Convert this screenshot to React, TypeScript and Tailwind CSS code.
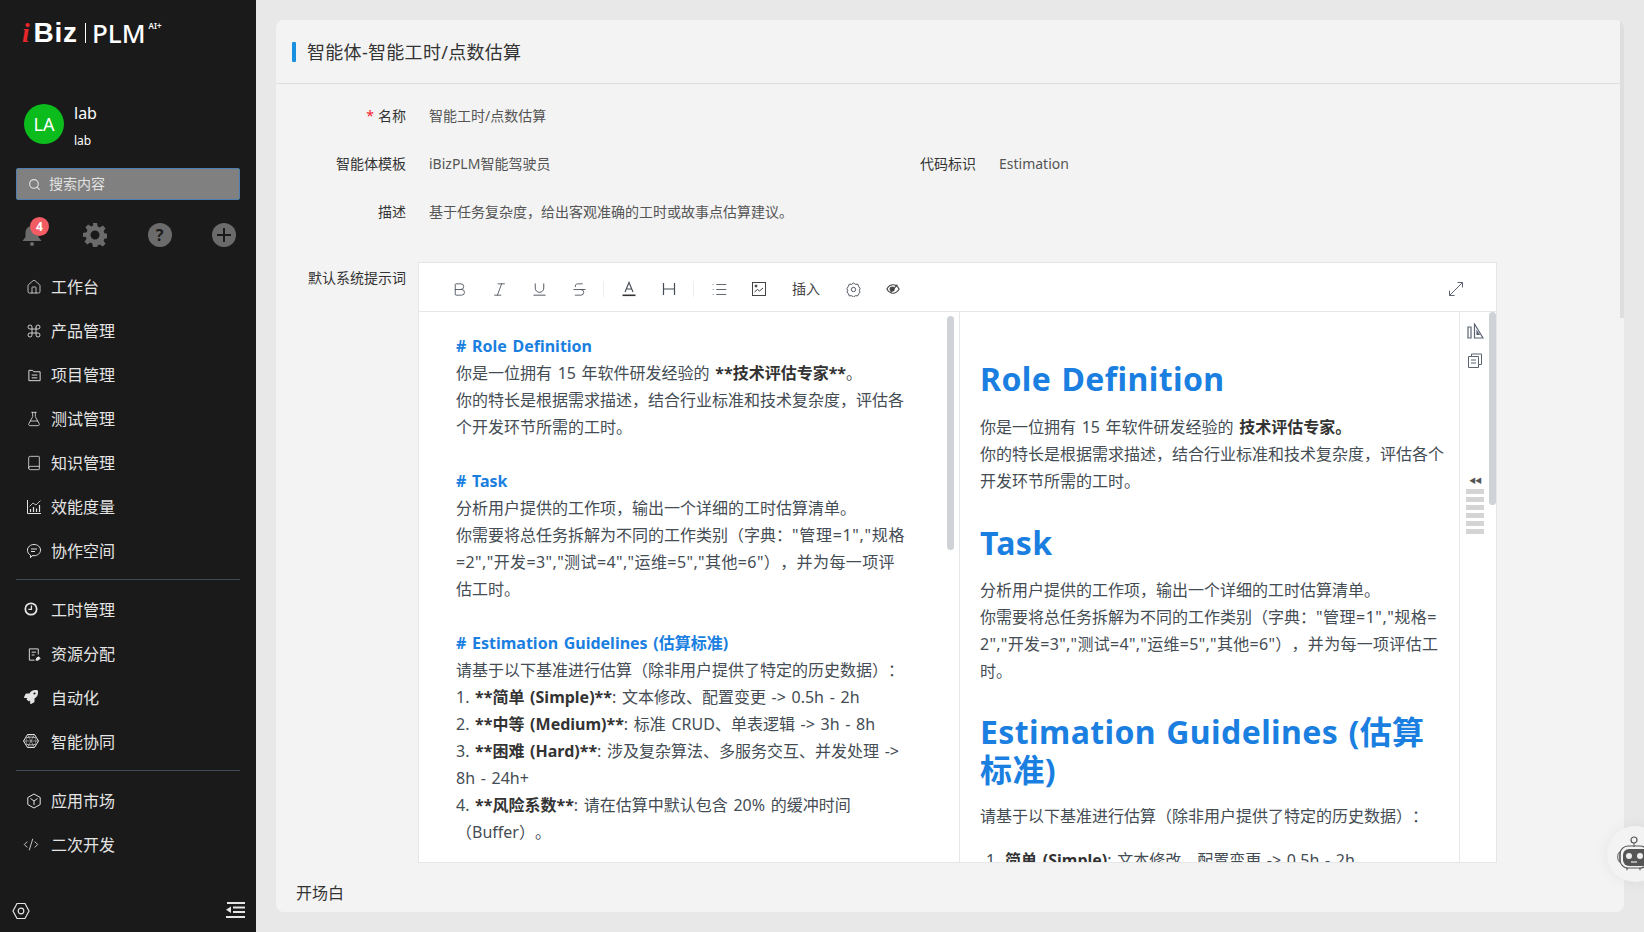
import React from "react";
import {
  Bold,
  Book,
  CodeXml,
  Command,
  FlaskConical,
  House,
  Italic,
  List,
  Search,
  Strikethrough,
  Underline,
} from "lucide-react";
import { FaRocket } from "react-icons/fa";

const Svg = ({ children, size = 16, className = "" }: { children: React.ReactNode; size?: number; className?: string }) => (
  <svg width={size} height={size} viewBox="0 0 16 16" fill="none" stroke="currentColor" strokeWidth="1" className={className}>
    {children}
  </svg>
);

const FolderIcon = () => (
  <Svg size={15}>
    <path d="M2 2.500h4l1 1.500h7v9.500H2z" />
    <path d="M5 7.500h6M5 10.500h6" />
  </Svg>
);
const ChartIcon = () => (
  <Svg>
    <path d="M1.500 1v13.500H15" />
    <path d="M4.500 13v-3M7.500 13V8M10.500 13V9.500M13.500 13V6" strokeWidth="1.200" />
    <path d="M3.500 7.500L7 4l3 2L14.500 1.500" strokeWidth="0.800" />
  </Svg>
);
const ChatIcon = () => (
  <Svg>
    <path d="M8 1.500c3.600 0 6.500 2.400 6.500 5.600S11.600 12.700 8 12.700H6l-1.500 2v-2.500C2.700 11.300 1.500 9.400 1.500 7.100 1.500 3.900 4.400 1.500 8 1.500z" />
    <path d="M5 6h6M5 8.500h4" />
  </Svg>
);
const ClockIcon = () => (
  <Svg size={14}>
    <circle cx="8" cy="8" r="6.500" strokeWidth="2" />
    <path d="M8.500 4v4.500H5" strokeWidth="1.500" />
  </Svg>
);
const ResourceIcon = () => (
  <Svg size={15}>
    <path d="M12 8V2H2.500v12H8" />
    <path d="M5 5.500h4.500M5 8.500h3" />
    <path d="M9.500 14l1-2.500 2-1 1.500 1.500-2 2z" fill="currentColor" />
  </Svg>
);
const AgentIcon = () => (
  <Svg size={18}>
    <path d="M4.500 1.500h7L15.500 8l-4 6.500h-7L.5 8z" />
    <path d="M4.500 1.500L11.500 14.500M11.500 1.500L4.500 14.500M.5 8h15M3 4.500h10M3 11.500h10" strokeWidth="0.500" />
    <circle cx="8" cy="8" r="5" strokeWidth="0.500" />
  </Svg>
);
const MarketIcon = () => (
  <Svg>
    <path d="M8 1l6.200 3.500v7L8 15l-6.200-3.500v-7z" />
    <path d="M4.500 5.500L8 8l3.500-2.500M8 8v4" />
  </Svg>
);

const topItems = [
  { label: "工作台", icon: <House size={16} strokeWidth={1.2} /> },
  { label: "产品管理", icon: <Command size={16} strokeWidth={1.3} /> },
  { label: "项目管理", icon: <FolderIcon /> },
  { label: "测试管理", icon: <FlaskConical size={16} strokeWidth={1.2} /> },
  { label: "知识管理", icon: <Book size={16} strokeWidth={1.2} /> },
  { label: "效能度量", icon: <ChartIcon /> },
  { label: "协作空间", icon: <ChatIcon /> },
];
const midItems = [
  { label: "工时管理", icon: <ClockIcon />, shift: true },
  { label: "资源分配", icon: <ResourceIcon /> },
  { label: "自动化", icon: <FaRocket size={14} />, shift: true },
  { label: "智能协同", icon: <AgentIcon />, shift: true },
];
const lowItems = [
  { label: "应用市场", icon: <MarketIcon /> },
  { label: "二次开发", icon: <CodeXml size={17} strokeWidth={1.3} />, shift: true },
];

type Item = { label: string; icon: React.ReactNode; shift?: boolean };

const NavList = ({ items }: { items: Item[] }) => (
  <ul>
    {items.map((item) => (
      <li key={item.label} className="flex h-11 items-center text-base text-[#e4e4e4]">
        <span className={`flex w-4 items-center justify-center ${item.shift ? "ml-[23px] mr-[12px] -translate-y-[1px]" : "ml-[26px] mr-[9px]"}`}>{item.icon}</span>
        {item.label}
      </li>
    ))}
  </ul>
);

const Sidebar = () => (
  <aside className="flex h-full w-64 shrink-0 flex-col bg-[#1a1a1a] text-white">
    <div className="flex h-[62px] items-start pl-[22px] pt-[18px] leading-none">
      <span className="mr-[4px] font-['Liberation_Serif'] text-[27px] italic font-bold leading-[30px] text-[#e8262a]">i</span>
      <span className="font-['Liberation_Sans'] text-[28px] font-bold leading-[30px] tracking-[0.8px]">Biz</span>
      <span className="ml-[7px] mr-[6px] mt-[5px] h-[20px] w-px bg-white" />
      <span className="text-[26px] font-medium leading-[30px]">PLM</span>
      <span className="ml-[3px] mt-[4px] text-[8px] font-semibold leading-none">AI+</span>
    </div>
    <div className="mt-[42px] flex h-[48px] pl-6">
      <div className="flex size-10 items-center justify-center rounded-full bg-[#0cbb1c] text-lg">LA</div>
      <div className="ml-[10px] -mt-[3px]">
        <div className="text-base leading-[24px]">lab</div>
        <div className="mt-[6px] text-xs leading-[20px]">lab</div>
      </div>
    </div>
    <div className="mx-4 mt-4 flex h-8 items-center rounded-[2px] border border-[#4f7fb0] bg-[#808080] pl-[11px] text-sm text-[#e2e2e2]">
      <Search size={13} strokeWidth={2} className="mr-2" />
      搜索内容
    </div>
    <div className="mt-[23px] flex h-6 items-center justify-between pl-[21px] pr-[20px] text-[#6b6b6b]">
      <div className="relative">
        <svg width="22" height="24" viewBox="0 0 22 24" fill="currentColor">
          <path d="M11 3c4 0 6.500 3 6.500 7v4l3 4H1.500l3-4v-4C4.500 6 7 3 11 3z" />
          <circle cx="11" cy="21" r="2" />
        </svg>
        <span className="absolute -top-[6px] left-[9px] flex size-[19px] items-center justify-center rounded-full bg-[#f25c62] text-xs font-bold text-white">4</span>
      </div>
      <svg width="24" height="24" viewBox="0 0 24 24" fill="currentColor">
        <path fillRule="evenodd" d="M10 0h4l.7 3.600 2 .8L19.800 2.400l2.800 2.800-2 3 .8 2 3.600.8v4l-3.600.7-.8 2 2 3-2.800 2.800-3-2-2 .8L14 24h-4l-.7-3.600-2-.8-3 2-2.800-2.800 2-3-.8-2L0 14v-4l3.600-.8.800-2-2-3L5.200 1.400l3 2 2-.8zM12 7.500a4.500 4.500 0 100 9 4.500 4.500 0 000-9z" />
      </svg>
      <span className="flex size-6 items-center justify-center rounded-full bg-[#6b6b6b] text-base font-bold text-[#1a1a1a]">?</span>
      <span className="flex size-6 items-center justify-center rounded-full bg-[#6b6b6b]">
        <svg width="14" height="14" viewBox="0 0 14 14" stroke="#1a1a1a" strokeWidth="2">
          <path d="M7 0v14M0 7h14" />
        </svg>
      </span>
    </div>
    <div className="mt-[18px]">
      <NavList items={topItems} />
    </div>
    <div className="mx-4 mt-[6px] mb-[8px] h-px bg-[#3f4a59]" />
    <NavList items={midItems} />
    <div className="mx-4 mt-[6px] mb-[8px] h-px bg-[#3f4a59]" />
    <NavList items={lowItems} />
    <div className="mt-auto flex h-[32px] items-start justify-between pl-3 pr-[11px] pt-[2px]">
      <svg width="18" height="18" viewBox="0 0 18 18" fill="none" stroke="#e4e4e4" strokeWidth="1.200">
        <path d="M5 1.500h8L17 9l-4 7.500H5L1 9z" />
        <circle cx="9" cy="9" r="2.800" />
      </svg>
      <svg width="19" height="16" viewBox="0 0 19 16" fill="#e4e4e4">
        <path d="M1 0h18v2H1zM7 4.500h12v2H7zM7 9h12v2H7zM0 14h19v2H0zM5 4.500v6.500L0 7.800z" />
      </svg>
    </div>
  </aside>
);

const FormRow = ({ label, required, children }: { label: string; required?: boolean; children: React.ReactNode }) => (
  <div className="flex h-12 items-center text-sm">
    <label className="w-[130px] shrink-0 text-right text-[#333]">
      {required && <span className="mr-1 text-[#f5222d]">*</span>}
      {label}
    </label>
    <div className="ml-[23px] text-[#555]">{children}</div>
  </div>
);

const ToolIcon = ({ children, className = "" }: { children: React.ReactNode; className?: string }) => (
  <span className={`flex h-6 w-6 items-center justify-center text-[#444b55] ${className}`}>{children}</span>
);

const Toolbar = () => (
  <div className="flex h-[49px] items-center border-b border-[#e5e6e8] pl-[28px] pr-[32px] pt-[4px]">
    <ToolIcon><Bold size={17} strokeWidth={1.2} /></ToolIcon>
    <ToolIcon className="ml-[16px]"><Italic size={17} strokeWidth={1.2} /></ToolIcon>
    <ToolIcon className="ml-[16px]"><Underline size={17} strokeWidth={1.3} /></ToolIcon>
    <ToolIcon className="ml-[16px]"><Strikethrough size={17} strokeWidth={1.2} /></ToolIcon>
    <span className="ml-[12px] h-4 w-px bg-[#eceef0]" />
    <ToolIcon className="ml-[13px]">
      <svg width="16" height="16" viewBox="0 0 16 16" fill="none" stroke="currentColor" strokeWidth="1.100">
        <path d="M4 11L8 1.500 12 11M5.200 8h5.600" />
        <path d="M1.500 14.300h13" stroke="#333" strokeWidth="1.600" />
      </svg>
    </ToolIcon>
    <ToolIcon className="ml-[16px]">
      <svg width="16" height="16" viewBox="0 0 16 16" fill="none" stroke="currentColor" strokeWidth="1.200">
        <path d="M2.500 2v12M13.500 2v12M2.500 8h11" />
      </svg>
    </ToolIcon>
    <span className="ml-[12px] h-4 w-px bg-[#eceef0]" />
    <ToolIcon className="ml-[13px]"><List size={17} strokeWidth={1.2} /></ToolIcon>
    <ToolIcon className="ml-[16px]">
      <svg width="16" height="16" viewBox="0 0 16 16" fill="none" stroke="#444" strokeWidth="1">
        <rect x="1.500" y="1.500" width="13" height="13" />
        <circle cx="5" cy="5" r="1" fill="#444" />
        <path d="M3.500 11l3-2.500 2 1.500 3.500-3" />
      </svg>
    </ToolIcon>
    <span className="ml-[21px] w-[28px] text-sm text-[#444]">插入</span>
    <ToolIcon className="ml-[21px]">
      <svg width="15" height="15" viewBox="0 0 16 16" fill="none" stroke="currentColor" strokeWidth="1">
        <path d="M8 1l2 1.500 2.500-.2 1 2.400L15 7l-.8 2 .8 2-1.500 1.300-1 2.500-2.500-.2-2 1.400-2-1.400-2.500.2-1-2.500L1 11l.8-2L1 7l1.500-2.300 1-2.400 2.500.2z" />
        <circle cx="8" cy="8" r="2.300" />
      </svg>
    </ToolIcon>
    <ToolIcon className="ml-[16px]">
      <svg width="14" height="14" viewBox="0 0 16 16" fill="none" stroke="#444" strokeWidth="1.300">
        <path d="M1 8c2-3.500 4.500-4.800 7-4.800s5 1.300 7 4.800c-2 3.500-4.500 4.800-7 4.800S3 11.500 1 8z" />
        <path d="M5 12L13 3" />
        <circle cx="7" cy="8" r="2.300" fill="#444" />
      </svg>
    </ToolIcon>
    <span className="ml-auto text-[#5b6470]">
      <svg width="16" height="16" viewBox="0 0 16 16" fill="none" stroke="currentColor" strokeWidth="1">
        <path d="M1.500 14.500L14.500 1.500M9.500 1.500h5v5M1.500 9.500v5h5" />
      </svg>
    </span>
  </div>
);

const Strong = ({ children }: { children: React.ReactNode }) => <strong className="font-bold text-[#333]">{children}</strong>;

const EditorPane = () => (
  <div className="relative h-full w-[541px] shrink-0 overflow-hidden border-r border-[#e5e6e8] pl-[37px] pr-[50px] pt-[21px] text-base leading-[27px] text-[#444c54] [text-spacing-trim:space-all] [word-spacing:1.5px]">
    <div className="font-bold text-[#1a7fe0]"># Role Definition</div>
    <div>你是一位拥有 15 年软件研发经验的 <Strong>**技术评估专家**</Strong>。</div>
    <div>你的特长是根据需求描述，结合行业标准和技术复杂度，评估各个开发环节所需的工时。</div>
    <div className="mt-[27px] font-bold text-[#1a7fe0]"># Task</div>
    <div>分析用户提供的工作项，输出一个详细的工时估算清单。</div>
    <div>
      你需要将总任务拆解为不同的工作类别（字典：<span className="tracking-[0.7px]">"管理=1","规格</span><br />
      <span className="tracking-[0.4px]">=2","开发=3","测试=4","运维=5","其他=6"），并为每一项评</span><br />
      估工时。
    </div>
    <div className="mt-[27px] font-bold text-[#1a7fe0]"># Estimation Guidelines (估算标准)</div>
    <div>请基于以下基准进行估算（除非用户提供了特定的历史数据）：</div>
    <div>1. <Strong>**简单 (Simple)**</Strong>: 文本修改、配置变更 -&gt; 0.5h - 2h</div>
    <div>2. <Strong>**中等 (Medium)**</Strong>: 标准 CRUD、单表逻辑 -&gt; 3h - 8h</div>
    <div>3. <Strong>**困难 (Hard)**</Strong>: 涉及复杂算法、多服务交互、并发处理 -&gt;<br />8h - 24h+</div>
    <div>4. <Strong>**风险系数**</Strong>: 请在估算中默认包含 20% 的缓冲时间<br />（Buffer）。</div>
    <div className="absolute right-[5px] top-[4px] h-[234px] w-[7px] rounded-full bg-[#cfd2d6]" />
  </div>
);

const PreviewPane = () => (
  <div className="h-full min-w-0 flex-1 overflow-hidden pl-5 pr-[10px] pt-[48px] text-base leading-[27.200px] text-[#444c54] [text-spacing-trim:space-all] [word-spacing:1.5px]">
    <h1 className="text-[32px] font-bold leading-[38px] tracking-[0.4px] text-[#1a7fe0]">Role Definition</h1>
    <p className="mt-4">你是一位拥有 15 年软件研发经验的 <Strong>技术评估专家。</Strong></p>
    <p>你的特长是根据需求描述，结合行业标准和技术复杂度，评估各个<br />开发环节所需的工时。</p>
    <h1 className="mt-7 text-[32px] font-bold leading-[38px] tracking-[0.4px] text-[#1a7fe0]">Task</h1>
    <p className="mt-[15px]">分析用户提供的工作项，输出一个详细的工时估算清单。</p>
    <p>
      你需要将总任务拆解为不同的工作类别（字典：<span className="tracking-[0.5px]">"管理=1","规格=</span><br />
      <span className="tracking-[0.3px]">2","开发=3","测试=4","运维=5","其他=6"），并为每一项评估工</span><br />
      时。
    </p>
    <h1 className="mt-7 text-[32px] font-bold leading-[38px] tracking-[0.4px] text-[#1a7fe0]">Estimation Guidelines (估算<br />标准)</h1>
    <p className="mt-[14px]">请基于以下基准进行估算（除非用户提供了特定的历史数据）：</p>
    <p className="mt-4 pl-[6px]">1. <Strong>简单 (Simple)</Strong>: 文本修改、配置变更 -&gt; 0.5h - 2h</p>
  </div>
);

const PreviewTools = () => (
  <div className="relative flex h-full w-[37px] shrink-0 flex-col items-center border-l border-[#e5e6e8] pr-[6px] pt-[11px] text-[#5b6470]">
    <svg width="17" height="16" viewBox="0 0 17 16" fill="none" stroke="currentColor" strokeWidth="1.200">
      <path d="M1 4h3v11H1zM7.500 1l8.500 14H7.500z" />
      <path d="M10 11.500h2l-2-3z" fill="currentColor" />
    </svg>
    <svg className="mt-[14px]" width="14" height="15" viewBox="0 0 14 15" fill="none" stroke="currentColor" strokeWidth="1">
      <path d="M3.500 3V1h10v10.500h-3" />
      <path d="M.5 3.500h10v11H.5zM3 7h5M3 10h5" />
    </svg>
    <div className="mt-[109px] text-[7px] leading-[8px] tracking-[-1px] text-[#555]">◀◀</div>
    <div className="mt-[4px] flex flex-col gap-[3px]">
      {[0, 1, 2, 3, 4, 5].map((i) => (
        <span key={i} className="block h-[5px] w-[18px] bg-[#d4d4d4]" />
      ))}
    </div>
    <div className="absolute right-[0px] top-0 h-[193px] w-[7px] rounded-full bg-[#cfd2d6]" />
  </div>
);

const Editor = () => (
  <div className="ml-[12px] flex h-[601px] w-[1079px] flex-col border border-[#e5e6e8] bg-white">
    <Toolbar />
    <div className="flex min-h-0 flex-1">
      <EditorPane />
      <PreviewPane />
      <PreviewTools />
    </div>
  </div>
);

export default function App() {
  return (
    <div className="flex h-[932px] w-[1644px] overflow-hidden bg-[#e8e8e8] font-['Noto_Sans','Noto_Sans_CJK_SC',sans-serif]">
      <Sidebar />
      <main className="relative min-w-0 flex-1 py-5 pl-5 pr-5">
        <div className="relative flex h-full flex-col overflow-hidden rounded-lg bg-[#f3f3f3]">
          <header className="flex h-[64px] shrink-0 items-center border-b border-[#dedede] pl-[16px]">
            <span className="mr-[11px] h-5 w-1 rounded-[1px] bg-[#1890e0]" />
            <h2 className="text-lg tracking-[0.3px] text-[#333]">智能体-智能工时/点数估算</h2>
          </header>
          <div className="min-h-0 flex-1 pt-[8px]">
            <FormRow label="名称" required>智能工时/点数估算</FormRow>
            <div className="flex">
              <div className="w-[570px]">
                <FormRow label="智能体模板">iBizPLM智能驾驶员</FormRow>
              </div>
              <FormRow label="代码标识">Estimation</FormRow>
            </div>
            <FormRow label="描述">基于任务复杂度，给出客观准确的工时或故事点估算建议。</FormRow>
            <div className="mt-[26px] flex">
              <label className="w-[130px] shrink-0 pt-[6px] text-right text-sm text-[#333]">默认系统提示词</label>
              <Editor />
            </div>
            <div className="mt-[18px] pl-[20px] text-base text-[#333]">开场白</div>
          </div>
          <div className="absolute right-0 top-0 h-[298px] w-1 bg-[#dedede]" />
        </div>
        <div className="absolute right-[-19px] top-[826px] flex size-14 items-center justify-start rounded-full bg-[#f3f3f3] pl-[9px] shadow-[0_0_16px_rgba(0,0,0,0.06)]">
          <svg width="30" height="36" viewBox="0 0 30 36" fill="none">
            <circle cx="18" cy="4" r="3" stroke="#555" strokeWidth="1.200" />
            <path d="M18 7v4" stroke="#555" />
            <rect x="4" y="10" width="28" height="22" rx="8" stroke="#555" strokeWidth="1.200" />
            <rect x="7" y="13" width="26" height="17" rx="6" fill="#555" />
            <path d="M4 16c-3 0-3 10 0 10z" stroke="#555" />
            <circle cx="13" cy="20" r="3" fill="#eee" />
            <circle cx="24" cy="20" r="3" fill="#eee" />
            <path d="M15 26h6" stroke="#ccc" strokeWidth="1.500" />
            <path d="M10 32l1 3 1-3M23 32l1 3 1-3" fill="#555" />
          </svg>
        </div>
      </main>
    </div>
  );
}
